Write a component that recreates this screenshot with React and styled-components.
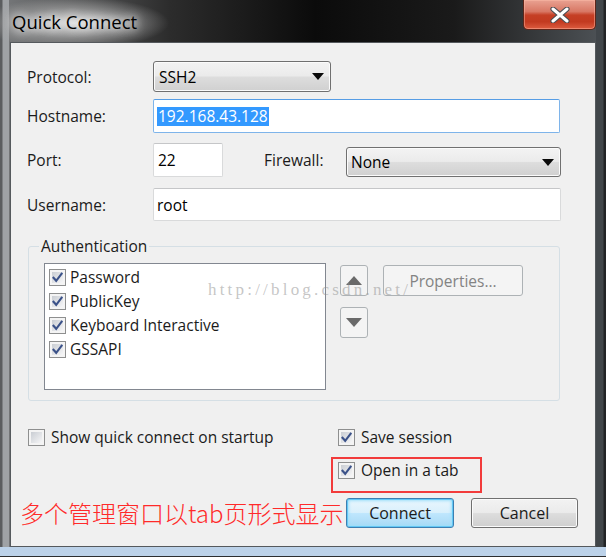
import React from "react";
import styled, { createGlobalStyle } from "styled-components";

const UI = `"Open Sans", "Noto Sans", "Liberation Sans", sans-serif`;

const GlobalStyle = createGlobalStyle`
  html, body { margin: 0; padding: 0; background: #1a1a1a; }
  body { font-family: ${UI}; }
  * { box-sizing: border-box; }
`;

const Window = styled.div`
  position: relative;
  width: 606px;
  height: 557px;
  display: flex;
  flex-direction: column;
  padding: 0 10px 10px 10px;
  overflow: hidden;
  background:
    radial-gradient(ellipse 95px 26px at 74px 23px, rgba(225, 225, 225, 0.95), rgba(170, 170, 170, 0.55) 60%, rgba(120, 120, 120, 0) 100%),
    linear-gradient(0deg, #2c2e30 0 1px, #bcd2e9 1px 10px, transparent 10px),
    linear-gradient(90deg, #5b5d5f 0 2px, #9fa2a5 3px 9px, transparent 9px),
    linear-gradient(270deg, #222426 0 2px, #41464a 3px 10px, transparent 10px),
    linear-gradient(90deg, #77797b 0%, #2c2c2c 28%, #0b0b0b 52%, #1a1a1a 75%, #4f5458 100%);
`;

const TitleBar = styled.div`
  height: 42px;
  flex: 0 0 auto;
  display: flex;
  justify-content: space-between;
  align-items: flex-start;
`;

const Title = styled.div`
  padding: 10px 0 0 2px;
  font-family: ${UI};
  font-size: 18.5px;
  line-height: 24px;
  color: #000;
  text-shadow: 0 0 8px #fff, 0 0 12px rgba(255, 255, 255, 0.9);
`;

const CloseButton = styled.div`
  width: 73px;
  height: 30px;
  display: flex;
  align-items: center;
  justify-content: center;
  border: 1px solid #5e2519;
  border-top: none;
  border-radius: 0 0 5px 5px;
  background: linear-gradient(180deg, #e9a292 0%, #d87764 40%, #c53f25 52%, #c23a20 75%, #dc5c40 100%);
  box-shadow: inset 0 0 0 1px rgba(255, 190, 170, 0.45);
`;

const Client = styled.div`
  flex: 1 1 auto;
  display: flex;
  flex-direction: column;
  background: #f0f0f0;
  border: 1px solid #55595d;
  padding-top: 18px;
  color: #1b1b1b;
  font-family: ${UI};
  font-size: 15.5px;
`;

const Form = styled.div`
  display: flex;
  flex-direction: column;
  padding-left: 16px;
`;

const Row = styled.div`
  display: flex;
  align-items: center;
  height: ${(p) => p.$h}px;
  margin-top: ${(p) => p.$mt || 0}px;
`;

const Label = styled.div`
  width: ${(p) => p.$w || 126}px;
  flex: 0 0 auto;
  margin-left: ${(p) => p.$ml || 0}px;
  line-height: 20px;
`;

const Select = styled.div`
  width: ${(p) => p.$w}px;
  height: ${(p) => p.$h}px;
  align-self: ${(p) => p.$align || "center"};
  display: flex;
  align-items: center;
  justify-content: space-between;
  padding: 0 6px 0 ${(p) => p.$pl || 5}px;
  border: 1px solid #707070;
  border-radius: 3px;
  background: linear-gradient(180deg, #f3f3f3 0%, #ebebeb 48%, #dddddd 52%, #d0d0d0 100%);
  box-shadow: inset 0 0 0 1px #fbfbfb;
  color: #000;
`;

const Input = styled.div`
  width: ${(p) => p.$w}px;
  height: ${(p) => p.$h}px;
  display: flex;
  align-items: center;
  padding-left: ${(p) => p.$pl || 4}px;
  background: #fff;
  border: 1px solid ${(p) => (p.$focus ? "#7eb4ea" : "#d9dadb")};
  border-top-color: ${(p) => (p.$focus ? "#569de5" : "#c5c6c8")};
  border-radius: 2px;
  color: #000;
`;

const Selected = styled.span`
  background: #3399ff;
  color: #fff;
  padding: 0 1px;
  line-height: 19px;
`;

const Group = styled.fieldset`
  margin: 16px 0 0 17px;
  width: 532px;
  padding: 8px 10px 10px 15px;
  border: 1px solid #d5dfe5;
  border-radius: 3px;
  min-width: 0;
`;

const Legend = styled.legend`
  margin-left: -5px;
  padding: 0 2px;
  line-height: 18px;
  font-size: 15.5px;
`;

const GroupBody = styled.div`
  display: flex;
  align-items: flex-start;
`;

const ListBox = styled.div`
  width: 282px;
  height: 127px;
  flex: 0 0 auto;
  background: #fff;
  border: 1px solid #828790;
  padding: 1px 4px;
  display: flex;
  flex-direction: column;
`;

const ListItem = styled.div`
  height: 24px;
  display: flex;
  align-items: center;
  gap: 4px;
`;

const ArrowColumn = styled.div`
  display: flex;
  flex-direction: column;
  gap: 11px;
  margin: 2px 0 0 14px;
`;

const ArrowButton = styled.div`
  width: 28px;
  height: 31px;
  display: flex;
  align-items: center;
  justify-content: center;
  border: 1px solid #adb2b5;
  border-radius: 3px;
  background: #f4f4f4;
`;

const DisabledButton = styled.div`
  width: 140px;
  height: 31px;
  margin: 2px 0 0 15px;
  display: flex;
  align-items: center;
  justify-content: center;
  border: 1px solid #adb2b5;
  border-radius: 3px;
  background: #f4f4f4;
  color: #838383;
`;

const Options = styled.div`
  display: grid;
  grid-template-columns: 303px auto;
  align-items: start;
  margin-top: 27px;
  padding-left: 17px;
`;

const CheckRow = styled.div`
  display: flex;
  align-items: center;
  gap: ${(p) => p.$gap || 6}px;
  height: 18px;
  padding-left: ${(p) => p.$pl || 0}px;
  line-height: 18px;
`;

const Highlight = styled.div`
  grid-column: 2;
  width: 151px;
  height: 36px;
  margin-top: 11px;
  border: 2px solid #f23b3b;
  padding: 2px 0 0 5px;
`;

const Footer = styled.div`
  display: flex;
  align-items: center;
  height: 30px;
  margin-top: 5px;
  padding: 0 17px 0 9px;
`;

const Note = styled.div`
  flex: 1 1 auto;
  white-space: nowrap;
  color: #ff2a2a;
  font-family: "Noto Sans CJK SC", "Noto Sans", sans-serif;
  font-size: 24px;
  line-height: 30px;
  font-weight: 300;
`;

const Button = styled.div`
  flex: 0 0 auto;
  width: ${(p) => p.$w}px;
  height: 30px;
  margin-left: ${(p) => p.$ml || 0}px;
  display: flex;
  align-items: center;
  justify-content: center;
  border-radius: 3px;
  color: #1b1b1b;
  font-size: 16px;
  border: 1px solid ${(p) => (p.$default ? "#3c7fb1" : "#707070")};
  background: ${(p) =>
    p.$default
      ? "linear-gradient(180deg, #eaf6fd 0%, #d9f0fc 48%, #bee6fd 52%, #a7d9f5 100%)"
      : "linear-gradient(180deg, #f2f2f2 0%, #ebebeb 48%, #dddddd 52%, #cfcfcf 100%)"};
  box-shadow: ${(p) =>
    p.$default
      ? "inset 0 0 0 1px #63c8f5, inset 0 0 3px 2px #9fdff9"
      : "inset 0 0 0 1px #fbfbfb"};
`;

const Watermark = styled.div`
  position: absolute;
  left: 208px;
  top: 280px;
  font-family: "Liberation Serif", serif;
  font-size: 17px;
  line-height: 20px;
  letter-spacing: 3.2px;
  color: rgba(140, 140, 140, 0.5);
  pointer-events: none;
  white-space: nowrap;
`;

const BoxFrame = styled.span`
  flex: 0 0 auto;
  width: 17px;
  height: 17px;
  display: grid;
  place-items: center;
  border: 1px solid #8e8f8f;
  padding: 2px;
  background: linear-gradient(135deg, #c9cdd3, #f6f6f7) content-box, #f4f4f4;
  box-shadow: inset 0 0 0 2px #f4f4f4;
`;

const CheckBox = ({ checked }) => (
  <BoxFrame>
    {checked && (
      <svg width="13" height="13" viewBox="0 0 13 13" style={{ gridArea: "1 / 1", margin: "-2px" }}>
        <path d="M2.5 6.8 L5.2 9.8 L10.6 2.8" fill="none" stroke="#3b5289" strokeWidth="2.1" strokeLinecap="square" />
      </svg>
    )}
  </BoxFrame>
);

const DropArrow = () => (
  <svg width="12" height="7" viewBox="0 0 12 7">
    <path d="M0 0 H12 L6 7 Z" fill="#0a0a0a" />
  </svg>
);

const Tri = ({ up }) => (
  <svg width="16" height="9" viewBox="0 0 16 9">
    <path d={up ? "M0 9 H16 L8 0 Z" : "M0 0 H16 L8 9 Z"} fill="#6a6a6a" />
  </svg>
);

export default function App() {
  return (
    <>
      <GlobalStyle />
      <Window>
        <TitleBar>
          <Title>Quick Connect</Title>
          <CloseButton>
            <svg width="20" height="16" viewBox="0 0 20 16">
              <path d="M3 2 L17 14 M17 2 L3 14" stroke="#4a4d52" strokeWidth="5.2" strokeLinecap="round" />
              <path d="M3 2 L17 14 M17 2 L3 14" stroke="#ffffff" strokeWidth="3" strokeLinecap="round" />
            </svg>
          </CloseButton>
        </TitleBar>
        <Client>
          <Form>
            <Row $h={31}>
              <Label>Protocol:</Label>
              <Select $w={178} $h={31}>
                <span>SSH2</span>
                <DropArrow />
              </Select>
            </Row>
            <Row $h={34} $mt={7}>
              <Label>Hostname:</Label>
              <Input $w={407} $h={34} $focus $pl={3}>
                <Selected>192.168.43.128</Selected>
              </Input>
            </Row>
            <Row $h={34} $mt={10}>
              <Label>Port:</Label>
              <Input $w={70} $h={34}>22</Input>
              <Label $w={82} $ml={41}>Firewall:</Label>
              <Select $w={215} $h={30} $align="flex-end" $pl={4}>
                <span>None</span>
                <DropArrow />
              </Select>
            </Row>
            <Row $h={33} $mt={11}>
              <Label>Username:</Label>
              <Input $w={408} $h={33} $pl={3}>root</Input>
            </Row>
          </Form>

          <Group>
            <Legend>Authentication</Legend>
            <GroupBody>
              <ListBox>
                {["Password", "PublicKey", "Keyboard Interactive", "GSSAPI"].map((t) => (
                  <ListItem key={t}>
                    <CheckBox checked />
                    <span>{t}</span>
                  </ListItem>
                ))}
              </ListBox>
              <ArrowColumn>
                <ArrowButton>
                  <Tri up />
                </ArrowButton>
                <ArrowButton>
                  <Tri />
                </ArrowButton>
              </ArrowColumn>
              <DisabledButton>Properties...</DisabledButton>
            </GroupBody>
          </Group>

          <Options>
            <CheckRow>
              <CheckBox />
              <span>Show quick connect on startup</span>
            </CheckRow>
            <CheckRow $pl={7}>
              <CheckBox checked />
              <span>Save session</span>
            </CheckRow>
            <Highlight>
              <CheckRow>
                <CheckBox checked />
                <span>Open in a tab</span>
              </CheckRow>
            </Highlight>
          </Options>

          <Footer>
            <Note>多个管理窗口以tab页形式显示</Note>
            <Button $w={108} $default>Connect</Button>
            <Button $w={107} $ml={17}>Cancel</Button>
          </Footer>
        </Client>
        <Watermark>http://blog.csdn.net/</Watermark>
      </Window>
    </>
  );
}
